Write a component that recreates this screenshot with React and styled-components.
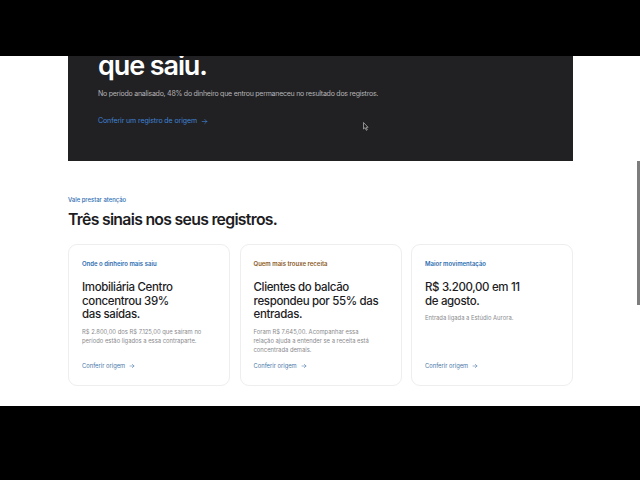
import React from "react";
import styled, { createGlobalStyle } from "styled-components";

const Global = createGlobalStyle`
  html, body { margin: 0; padding: 0; background: #000; }
  body { font-family: Inter, "Liberation Sans", sans-serif; -webkit-font-smoothing: antialiased; }
`;

const Frame = styled.div`
  width: 640px;
  height: 480px;
  background: #000;
  display: flex;
  flex-direction: column;
  overflow: hidden;
`;
const Letterbox = styled.div`
  height: ${(p) => p.$h}px;
  flex: none;
  background: #000;
`;
const Viewport = styled.main`
  position: relative;
  height: 350px;
  flex: none;
  background: #fff;
  overflow: hidden;
  padding: 0 67px 0 68px;
`;
const Hero = styled.section`
  height: 105px;
  background: #212123;
  padding: 0 30px;
  display: flex;
  flex-direction: column;
`;
const HeroTitle = styled.h1`
  margin: 2px 0 0;
  font-size: 27px;
  line-height: 15px;
  font-weight: 600;
  letter-spacing: -1.1px;
  color: #fff;
`;
const HeroText = styled.p`
  margin: 15px 0 0;
  font-size: 7px;
  line-height: 12px;
  letter-spacing: -0.24px;
  color: #b4b4b7;
`;
const HeroLink = styled.a`
  margin-top: 15px;
  display: flex;
  align-items: center;
  gap: 4px;
  font-size: 7px;
  line-height: 12px;
  letter-spacing: -0.1px;
  color: #3f83d6;
`;
const Section = styled.section`
  padding-top: 34px;
`;
const Eyebrow = styled.div`
  font-size: 5.9px;
  line-height: 10px;
  font-weight: 500;
  color: #2d6cb0;
`;
const Heading = styled.h2`
  margin: 3px 0 0;
  font-size: 15.8px;
  line-height: 24px;
  font-weight: 600;
  letter-spacing: -0.7px;
  color: #1d1d1f;
`;
const Cards = styled.div`
  margin-top: 12px;
  display: grid;
  grid-template-columns: repeat(3, 162px);
  gap: 9.5px;
`;
const Card = styled.article`
  box-sizing: border-box;
  height: 142px;
  padding: 14px 13px 14px;
  background: #fff;
  border: 1px solid #eeeeef;
  border-radius: 9px;
  display: flex;
  flex-direction: column;
`;
const Label = styled.div`
  font-size: 6px;
  line-height: 10px;
  font-weight: 600;
  color: ${(p) => p.$color};
`;
const CardTitle = styled.h3`
  margin: 12px 0 0;
  font-size: 11.5px;
  line-height: 13.6px;
  font-weight: 500;
  letter-spacing: -0.35px;
  color: #1d1d1f;
`;
const CardText = styled.p`
  margin: 5px 0 0;
  font-size: 5.85px;
  line-height: 9.2px;
  color: #8a8a8e;
`;
const CardLink = styled.a`
  margin-top: auto;
  display: flex;
  align-items: center;
  gap: 4px;
  font-size: 5.8px;
  line-height: 10px;
  color: #4a78a8;
`;
const Scrollbar = styled.div`
  position: absolute;
  top: 105px;
  right: 0;
  width: 3px;
  height: 144px;
  background: #7d7d7d;
`;
const Cursor = styled.svg`
  position: absolute;
  left: 363px;
  top: 66px;
  width: 6px;
  height: 9px;
`;

const Arrow = ({ size }) => (
  <svg width={size} height={size} viewBox="0 0 24 24" fill="none" stroke="currentColor" strokeWidth="2.2" strokeLinecap="round" strokeLinejoin="round">
    <path d="M4 12h16M13 5l7 7-7 7" />
  </svg>
);

const cards = [
  { label: "Onde o dinheiro mais saiu", color: "#2d6cb0", title: <>Imobiliária Centro<br />concentrou 39%<br />das saídas.</>, text: <>R$ 2.800,00 dos R$ 7.125,00 que saíram no<br />período estão ligados a essa contraparte.</> },
  { label: "Quem mais trouxe receita", color: "#8a5a1e", title: <>Clientes do balcão<br />respondeu por 55% das<br />entradas.</>, text: <>Foram R$ 7.645,00. Acompanhar essa<br />relação ajuda a entender se a receita está<br />concentrada demais.</> },
  { label: "Maior movimentação", color: "#2d6cb0", title: <>R$ 3.200,00 em 11<br />de agosto.</>, text: "Entrada ligada a Estúdio Aurora." },
];

export default function App() {
  return (
    <Frame>
      <Global />
      <Letterbox $h={56} />
      <Viewport>
        <Hero>
          <HeroTitle>que saiu.</HeroTitle>
          <HeroText>No período analisado, 48% do dinheiro que entrou permaneceu no resultado dos registros.</HeroText>
          <HeroLink>Conferir um registro de origem <Arrow size={7} /></HeroLink>
        </Hero>
        <Section>
          <Eyebrow>Vale prestar atenção</Eyebrow>
          <Heading>Três sinais nos seus registros.</Heading>
          <Cards>
            {cards.map((c) => (
              <Card key={c.label}>
                <Label $color={c.color}>{c.label}</Label>
                <CardTitle>{c.title}</CardTitle>
                <CardText>{c.text}</CardText>
                <CardLink>Conferir origem <Arrow size={6} /></CardLink>
              </Card>
            ))}
          </Cards>
        </Section>
        <Scrollbar />
        <Cursor viewBox="0 0 6 9">
          <path d="M.5.5v6.5l1.5-1.3 1.3 2.6 1-.5-1.2-2.5h2z" fill="#222" stroke="#bbb" strokeWidth=".7" />
        </Cursor>
      </Viewport>
      <Letterbox $h={74} />
    </Frame>
  );
}
